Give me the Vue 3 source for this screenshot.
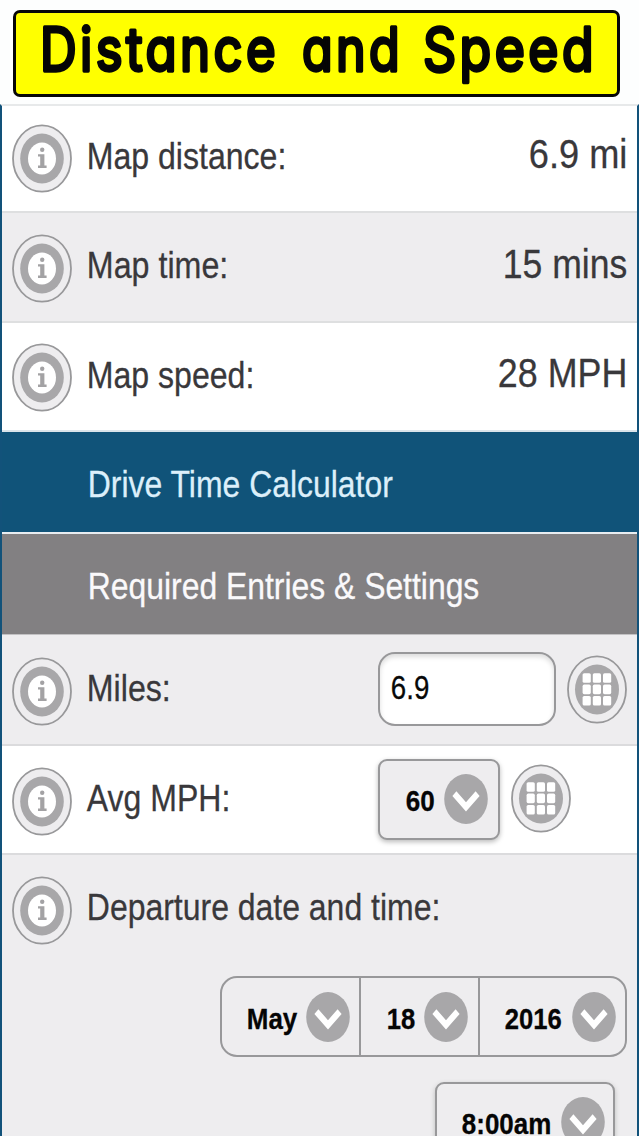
<script setup>
import { h } from 'vue'

// Single line of condensed text: w is its advance width
const TextLine = (p) =>
  h('svg', { width: p.w, height: 40, class: 'line' }, [
    h('text', { transform: 'translate(0.8 31) scale(1 1.14)', textLength: p.w, lengthAdjust: 'spacingAndGlyphs' }, p.t),
  ])
TextLine.props = ['w', 't']

const Info = () =>
  h('svg', { width: 60, height: 69, viewBox: '0 0 60 69' }, [
    h('ellipse', { cx: 30, cy: 34.5, rx: 29, ry: 33.2, fill: '#eeedef', stroke: '#98989a', 'stroke-width': 1.8 }),
    h('ellipse', { cx: 30, cy: 34.5, rx: 21.8, ry: 25, fill: '#a8a7a9' }),
    h('ellipse', { cx: 30, cy: 34.5, rx: 14, ry: 16, fill: '#fff' }),
    h('ellipse', { cx: 30.2, cy: 25.8, rx: 2.2, ry: 2.3, fill: '#a3a2a4' }),
    h('path', { d: 'M26 30.2H32.4V41.6H34.6V44H26V41.6H28.2V32.6H26Z', fill: '#a3a2a4' }),
  ])

const GridButton = () =>
  h('svg', { width: 60, height: 69, viewBox: '0 0 60 69' }, [
    h('ellipse', { cx: 30, cy: 34.5, rx: 29, ry: 33.2, fill: '#eeedef', stroke: '#98989a', 'stroke-width': 1.8 }),
    h('ellipse', { cx: 30, cy: 34.5, rx: 22, ry: 25, fill: '#a8a7a9' }),
    ...[0, 1, 2].flatMap((r) =>
      [0, 1, 2].map((c) =>
        h('rect', { x: 15.6 + c * 10.2, y: 18.2 + r * 11.4, width: 8.2, height: 9.6, rx: 1.6, fill: '#fff' }))),
  ])

const Chevron = () =>
  h('svg', { width: 44, height: 50, viewBox: '0 0 44 50' }, [
    h('ellipse', { cx: 22, cy: 25, rx: 21.8, ry: 25, fill: '#a8a7a9' }),
    h('path', { d: 'M12.4 17.3L8.4 22L22 37.5L35.6 22L31.6 17.3L22 28.2Z', fill: '#fff' }),
  ])

const stats = [
  { label: 'Map distance:', lw: 199.5, value: '6.9 mi', vw: 98.5 },
  { label: 'Map time:', lw: 141.5, value: '15 mins', vw: 124.5 },
  { label: 'Map speed:', lw: 167.5, value: '28 MPH', vw: 129.5 },
]
const dateParts = [
  { t: 'May', w: 50.5, cls: 'month' },
  { t: '18', w: 28.5, cls: 'day' },
  { t: '2016', w: 57, cls: 'year' },
]
</script>

<template>
  <main class="screen">
    <header>
      <div class="banner">
        <svg width="600" height="80">
          <g class="title">
            <text x="24" y="57.5" textLength="239" lengthAdjust="spacingAndGlyphs">Distance</text>
            <text x="286" y="57.5" textLength="101" lengthAdjust="spacingAndGlyphs">and</text>
            <text x="407" y="57.5" textLength="174" lengthAdjust="spacingAndGlyphs">Speed</text>
          </g>
        </svg>
      </div>
    </header>
    <section class="panel">
      <div v-for="(s, i) in stats" :key="s.label" class="row stat" :class="{ shaded: i === 1, last: i === 2 }">
        <Info class="info" />
        <TextLine :t="s.label" :w="s.lw" class="label" />
        <TextLine :t="s.value" :w="s.vw" class="value" />
      </div>
      <div class="band blue"><TextLine t="Drive Time Calculator" w="305" /></div>
      <div class="band gray"><TextLine t="Required Entries &amp; Settings" w="391.5" /></div>
      <div class="row field shaded miles">
        <Info class="info" />
        <TextLine t="Miles:" w="84" class="label" />
        <div class="input"><TextLine t="6.9" w="38.5" /></div>
        <GridButton class="grid-btn" />
      </div>
      <div class="row field mph">
        <Info class="info" />
        <TextLine t="Avg MPH:" w="143.5" class="label" />
        <div class="select speed"><TextLine t="60" w="29" /><Chevron class="chev" /></div>
        <GridButton class="grid-btn" />
      </div>
      <div class="departure shaded">
        <div class="row">
          <Info class="info" />
          <TextLine t="Departure date and time:" w="353.5" class="label" />
        </div>
        <div class="date-group">
          <div v-for="d in dateParts" :key="d.t" class="part" :class="d.cls">
            <TextLine :t="d.t" :w="d.w" /><Chevron class="chev" />
          </div>
        </div>
        <div class="select time"><TextLine t="8:00am" w="89.5" /><Chevron class="chev" /></div>
      </div>
    </section>
  </main>
</template>

<style>
body { overflow: hidden; }
</style>

<style scoped>
.screen {
  box-sizing: border-box;
  width: 639px;
  height: 1136px;
  overflow: hidden;
  background: #fdfefe;
  font-family: "Liberation Sans", Arial, sans-serif;
  font-size: 32.3px;
}
.screen svg { display: block; flex: none; overflow: visible; fill: currentColor; }
.line { stroke: currentColor; stroke-width: 0.25px; }
header { box-sizing: border-box; height: 104px; padding: 10px 0 0 13px; }
.banner {
  box-sizing: border-box;
  width: 607px;
  height: 87px;
  border: 3px solid #080808;
  border-radius: 7px;
  background: #ff0;
}
.title {
  font-family: Inter, "Open Sans", sans-serif;
  font-feature-settings: "cv11";
  font-size: 60px;
  font-weight: 400;
  letter-spacing: 4px;
  fill: #050505;
  stroke: #050505;
  stroke-width: 3.4px;
  stroke-linejoin: round;
}
.panel {
  border-top: 2px solid #e7e9ea;
  border-left: 2px solid #12527a;
  border-right: 2px solid #12527a;
  background: #fff;
  color: #39383b;
}
.row { box-sizing: border-box; display: flex; align-items: flex-start; }
.shaded { background: #eeedef; }
.stat { height: 109.5px; padding-top: 20.5px; border-bottom: 2px solid #dedfe0; }
.stat:first-child { height: 107px; padding-top: 18px; }
.stat.last { border-color: #dbe4ea; }
.info { margin: 0 14.4px 0 10px; }
.stat .label { margin-top: 13.5px; }
.value { margin: 13px 11px 0 auto; font-size: 36.2px; }
.band { box-sizing: border-box; height: 102px; padding: 34px 0 0 84.5px; }
.blue { background: #105379; color: #dceffa; border-bottom: 2px solid #e8edf1; }
.gray { height: 101px; background: #828082; color: #faf9fb; border-bottom: 1px solid #c2c1c3; }
.field { display: grid; grid-template-columns: 84.4px 291.6px auto auto 1fr; border-bottom: 2px solid #dbdbdd; }
.miles { height: 111px; padding-top: 17px; }
.mph { height: 109px; padding-top: 13px; }
.miles .info { margin-top: 4.5px; }
.miles .label { margin-top: 18px; }
.input {
  box-sizing: border-box;
  width: 178px;
  height: 74px;
  padding: 14px 0 0 10.5px;
  border: 2px solid #98989a;
  border-radius: 17px;
  background: #fff;
  color: #080808;
  font-size: 28.4px;
  box-shadow: inset 0 3px 5px #ddd;
}
.grid-btn { margin: 2.5px 0 0 11px; }
.mph .info { margin-top: 7.5px; }
.mph .label { margin-top: 20.5px; }
.mph .grid-btn { margin-top: 5px; }
.select {
  box-sizing: border-box;
  display: flex;
  border: 2px solid #98989a;
  border-radius: 9px;
  background: #eeedef;
  color: #050505;
  font-size: 25.6px;
  font-weight: 700;
  box-shadow: 0 2px 5px #bbb;
}
.speed { width: 122px; height: 81px; padding: 18.5px 0 0 25px; }
.speed .chev, .time .chev { margin: -6px 0 0 10.5px; }
.departure { height: 290px; overflow: hidden; }
.departure .row { padding-top: 20.5px; }
.departure .label { margin-top: 13px; }
.date-group {
  box-sizing: border-box;
  display: flex;
  width: 407px;
  height: 81px;
  margin: 31px 0 0 218px;
  border: 2px solid #98989a;
  border-radius: 17px;
  color: #050505;
  font-size: 25.6px;
  font-weight: 700;
}
.part { box-sizing: border-box; display: flex; }
.part + .part { border-left: 2px solid #98989a; }
.part .chev { margin: -6px 0 0 auto; }
.month { width: 137px; padding: 20px 9px 0 24px; }
.day { width: 119px; padding: 20px 10px 0 25px; }
.year { width: 147px; padding: 20px 9.5px 0 23.5px; }
.time { width: 180px; height: 81px; margin: 25px 0 0 433px; padding: 19px 0 0 24px; }
.time .chev { margin-left: 10px; }
</style>
